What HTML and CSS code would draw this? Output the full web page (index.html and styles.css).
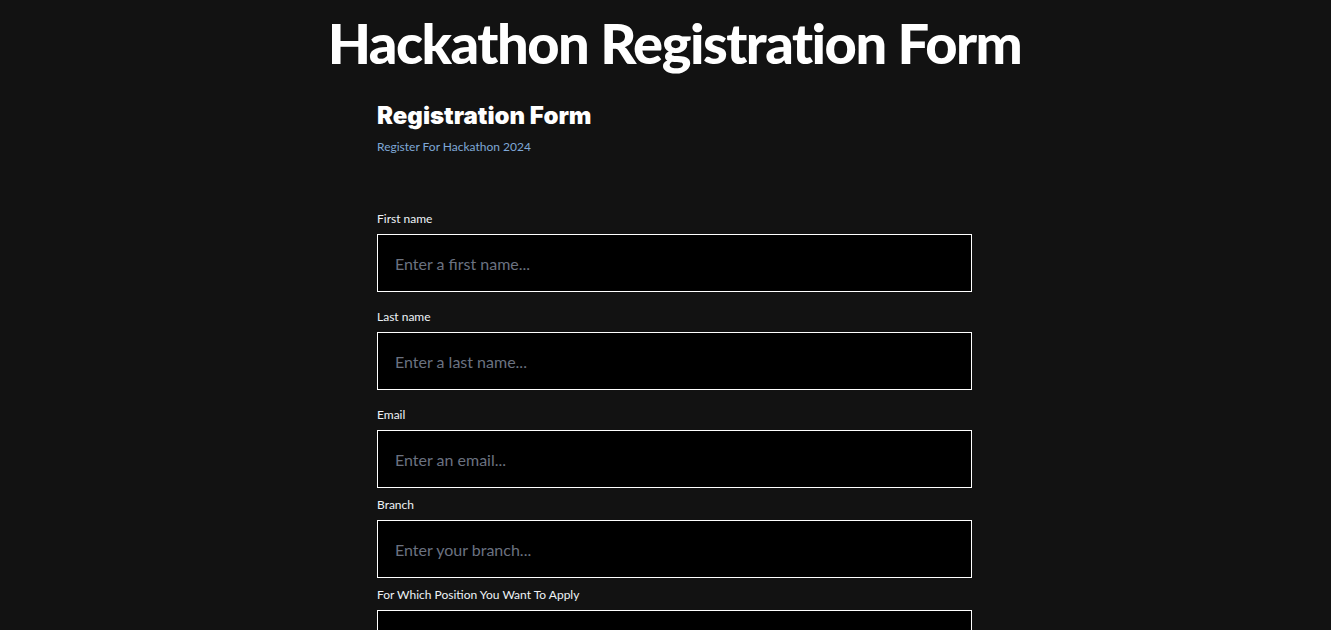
FILE: index.html
```html
<!DOCTYPE html>
<html lang="en">
<head>
<meta charset="utf-8">
<title>Hackathon Registration Form</title>
<link rel="stylesheet" href="styles.css">
</head>
<body>
  <h1 class="page-title">Hackathon Registration Form</h1>
  <form class="form">
    <h2 class="form-title">Registration Form</h2>
    <p class="form-subtitle">Register For Hackathon 2024</p>
    <div class="fields">
      <div class="field field-wide">
        <label class="label" for="fn">First name</label>
        <input class="input" id="fn" type="text" placeholder="Enter a first name...">
      </div>
      <div class="field field-wide">
        <label class="label" for="ln">Last name</label>
        <input class="input" id="ln" type="text" placeholder="Enter a last name...">
      </div>
      <div class="field">
        <label class="label" for="em">Email</label>
        <input class="input" id="em" type="email" placeholder="Enter an email...">
      </div>
      <div class="field">
        <label class="label" for="br">Branch</label>
        <input class="input" id="br" type="text" placeholder="Enter your branch...">
      </div>
      <div class="field">
        <label class="label" for="pos">For Which Position You Want To Apply</label>
        <input class="input" id="pos" type="text">
      </div>
    </div>
  </form>
</body>
</html>
```

FILE: styles.css
```css
html, body {
  margin: 0;
  background: #121212;
}
body {
  padding: 0 0 0 18px;
  color: #ffffff;
  font-family: "Lato", "Open Sans", sans-serif;
}
.page-title {
  margin: 15px 0 0;
  font-size: 56px;
  line-height: 1;
  font-weight: 900;
  letter-spacing: -1.5px;
  text-align: center;
}
.form {
  width: 595px;
  margin: 33px auto 0;
}
.form-title {
  margin: 0;
  font-family: "Inter", "Lato", sans-serif;
  font-size: 24px;
  line-height: 1;
  font-weight: 900;
}
.form-subtitle {
  margin: 11px 0 0;
  font-size: 12px;
  line-height: 16px;
  color: #7fa8d6;
}
.fields {
  margin-top: 55px;
  display: flex;
  flex-direction: column;
  gap: 8px;
}
.field {
  display: flex;
  flex-direction: column;
  gap: 6px;
}
.field-wide {
  margin-bottom: 8px;
}
.label {
  font-size: 12px;
  line-height: 18px;
  color: #eef2f7;
}
.input {
  box-sizing: border-box;
  height: 58px;
  width: 100%;
  margin: 0;
  padding: 0 17px;
  background: #000;
  border: 1px solid #ffffff;
  border-radius: 0;
  color: #fff;
  font-family: inherit;
  font-size: 16px;
  outline: none;
}
.input::placeholder {
  color: #6b7280;
}
```
